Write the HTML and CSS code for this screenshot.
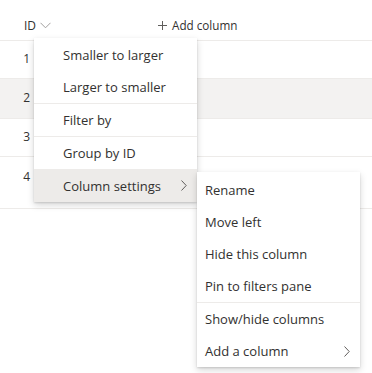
FILE: index.html
```html
<!DOCTYPE html>
<html>
<head>
<meta charset="utf-8">
<link rel="stylesheet" href="styles.css">
</head>
<body>
<div class="list">
  <div class="header">
    <div class="col-id">
      <span>ID</span>
      <svg class="chev-down" width="11" height="7" viewBox="0 0 11 7"><path d="M0.5 0.8 L5.5 5.8 L10.5 0.8" fill="none" stroke="#a19f9d" stroke-width="1"/></svg>
    </div>
    <div class="add-col">
      <svg width="9" height="9" viewBox="0 0 9 9"><path d="M4.5 0 V9 M0 4.5 H9" stroke="#605e5c" stroke-width="1"/></svg>
      <span>Add column</span>
    </div>
  </div>
  <div class="row r1"><span class="num">1</span></div>
  <div class="row r2 shaded"><span class="num">2</span></div>
  <div class="row r3"><span class="num">3</span></div>
  <div class="row r4"><span class="num">4</span></div>
</div>

<div class="menu main-menu">
  <div class="item indent">Smaller to larger</div>
  <div class="item indent">Larger to smaller</div>
  <div class="divider"></div>
  <div class="item indent">Filter by</div>
  <div class="divider"></div>
  <div class="item indent">Group by ID</div>
  <div class="item indent active">Column settings
    <svg class="chev-right" width="6" height="11" viewBox="0 0 6 11"><path d="M0.5 0.5 L5.2 5.5 L0.5 10.5" fill="none" stroke="#605e5c" stroke-width="1"/></svg>
  </div>
</div>

<div class="menu sub-menu">
  <div class="item">Rename</div>
  <div class="item">Move left</div>
  <div class="item">Hide this column</div>
  <div class="item">Pin to filters pane</div>
  <div class="divider"></div>
  <div class="item">Show/hide columns</div>
  <div class="item">Add a column
    <svg class="chev-right" width="6" height="11" viewBox="0 0 6 11"><path d="M0.5 0.5 L5.2 5.5 L0.5 10.5" fill="none" stroke="#605e5c" stroke-width="1"/></svg>
  </div>
</div>
</body>
</html>
```
FILE: styles.css
```css
html, body {
  margin: 0;
  padding: 0;
  background: #ffffff;
}
body {
  font-family: "Open Sans", "Noto Sans", sans-serif;
  color: #323130;
  position: relative;
  width: 372px;
  height: 373px;
  overflow: hidden;
}
.list {
  display: flex;
  flex-direction: column;
}
.header {
  height: 30px;
  padding-top: 10px;
  border-bottom: 1px solid #edebe9;
  display: flex;
  align-items: center;
  font-size: 12px;
  padding-left: 24px;
}
.col-id {
  display: flex;
  align-items: center;
  gap: 4px;
  width: 134px;
}
.chev-down {
  margin-top: 1px;
}
.add-col {
  display: flex;
  align-items: center;
  gap: 5px;
  font-size: 11.7px;
}
.row {
  border-bottom: 1px solid #edebe9;
  font-size: 12px;
  display: flex;
  align-items: flex-start;
  box-sizing: border-box;
}
.r1 { height: 38px; padding-top: 9px; }
.r2 { height: 40px; padding-top: 10px; }
.r3 { height: 38px; padding-top: 9px; }
.r4 { height: 52px; padding-top: 11px; }
.shaded {
  background: #f3f2f1;
}
.num {
  width: 30px;
  text-align: right;
}
.menu {
  position: absolute;
  background: #ffffff;
  box-shadow: 0 3.2px 7.2px rgba(0,0,0,0.16), 0 0.6px 1.8px rgba(0,0,0,0.13);
  font-size: 13px;
  color: #323130;
  display: flex;
  flex-direction: column;
}
.main-menu {
  left: 34px;
  top: 38px;
  width: 163px;
  padding-top: 1px;
}
.sub-menu {
  left: 197px;
  top: 172px;
  width: 163px;
  padding-top: 2px;
}
.item {
  height: 32px;
  display: flex;
  align-items: center;
  padding-left: 8px;
  padding-right: 10px;
  position: relative;
}
.item.indent {
  padding-left: 29px;
}
.item.active {
  background: #edebe9;
  height: 33px;
}
.divider {
  height: 1px;
  background: #edebe9;
}
.chev-right {
  margin-left: auto;
}
```
